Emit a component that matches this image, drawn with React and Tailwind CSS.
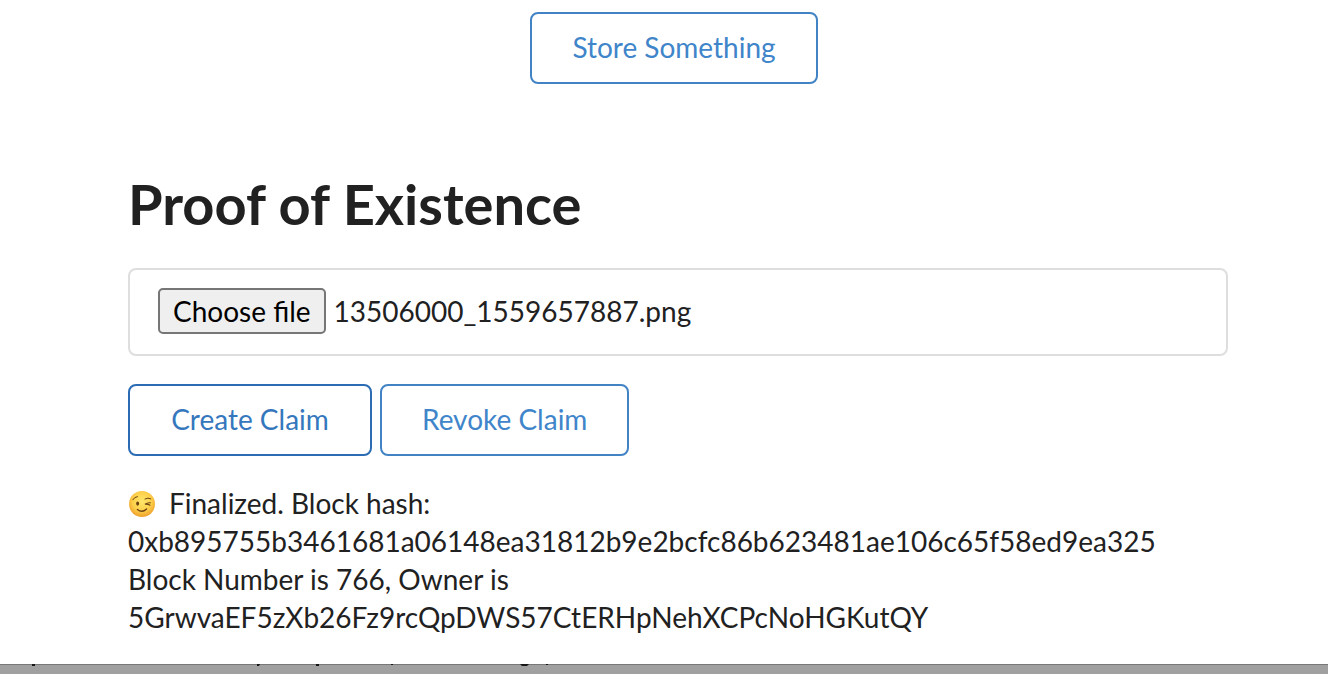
import { useRef, useState } from "react";

function OutlineButton({ active = false, children }) {
  return (
    <button
      type="button"
      className={
        active
          ? "min-w-[244px] rounded-lg border-2 border-[#2c6cb4] px-10 pt-[19px] pb-[21px] text-[28px] leading-7 text-[#3577bd]"
          : "min-w-[244px] rounded-lg border-2 border-[#4183c4] px-10 pt-[19px] pb-[21px] text-[28px] leading-7 text-[#4085ca]"
      }
    >
      {children}
    </button>
  );
}

function FilePicker() {
  const input = useRef(null);
  const [name, setName] = useState("13506000_1559657887.png");

  return (
    <div className="mt-7 flex items-center gap-2 rounded-lg border-2 border-[#dededf] px-7 pt-[18px] pb-5">
      <input
        ref={input}
        type="file"
        aria-label="File to claim"
        tabIndex={-1}
        className="hidden"
        onChange={(e) => e.target.files[0] && setName(e.target.files[0].name)}
      />
      <button
        type="button"
        onClick={() => input.current.click()}
        className="rounded-[5px] border-2 border-[#767676] bg-[#efefef] px-[13px] py-[3px] leading-9 text-black"
      >
        Choose file
      </button>
      <span className="leading-9">{name}</span>
    </div>
  );
}

function WinkingFace() {
  return (
    <svg viewBox="0 0 28 28" className="mr-[13px] inline-block size-7 align-[-4px]" role="img" aria-label="Winking face">
      <defs>
        <radialGradient id="face" cx="0.5" cy="0.4" r="0.6">
          <stop offset="0" stopColor="#ffe66b" />
          <stop offset="0.6" stopColor="#fdd04a" />
          <stop offset="1" stopColor="#ee9f2a" />
        </radialGradient>
      </defs>
      <circle cx="14" cy="14" r="13" fill="url(#face)" />
      <ellipse cx="9.6" cy="13.6" rx="1.5" ry="2.1" fill="#6b4111" />
      <g fill="none" stroke="#6b4111" strokeLinecap="round">
        <path d="M4.8 9.8Q6.3 6.8 9.4 6.6" strokeWidth="1" />
        <path d="M17 9Q20 7.2 22.8 8.8" strokeWidth="1" />
        <path d="M22.4 12.8Q19.6 12.4 17 14.2Q19.8 13.8 22 15.2" strokeWidth="1.1" />
        <path d="M9.4 19.4Q14 23.4 18.6 19" strokeWidth="1.3" />
      </g>
    </svg>
  );
}

export default function App() {
  return (
    <div className="flex min-h-screen flex-col bg-white font-['Lato',sans-serif] text-[28px] leading-[38px] text-[#212122]">
      <main className="grow">
        <div className="flex justify-center pt-3 pl-5">
          <OutlineButton>Store Something</OutlineButton>
        </div>
        <section className="mt-[84px] mr-[100px] ml-32">
          <h1 className="text-[56px] leading-[72px] font-bold">Proof of Existence</h1>
          <FilePicker />
          <div className="mt-7 flex gap-2">
            <OutlineButton active>Create Claim</OutlineButton>
            <OutlineButton>Revoke Claim</OutlineButton>
          </div>
          <p className="mt-7 break-words">
            <WinkingFace />
            Finalized. Block hash:
            <br />
            0xb895755b3461681a06148ea31812b9e2bcfc86b623481ae106c65f58ed9ea325
            <br />
            Block Number is 766, Owner is
            <br />
            5GrwvaEF5zXb26Fz9rcQpDWS57CtERHpNehXCPcNoHGKutQY
          </p>
        </section>
      </main>
      <footer className="h-[10px] bg-[#a0a0a0]">
        <svg width="100%" height="3" className="block" aria-hidden="true" fill="#161616">
          <rect width="100%" height="1" fill="#777777" />
          <path d="M32 0h3v2h-3zM257 0h3l-1 2h-2zM316 0h3v2h-3zM391 0h2v1h-2zM520 0h9l-2 2h-5zM546 0h2v1h-2z" />
        </svg>
      </footer>
    </div>
  );
}
